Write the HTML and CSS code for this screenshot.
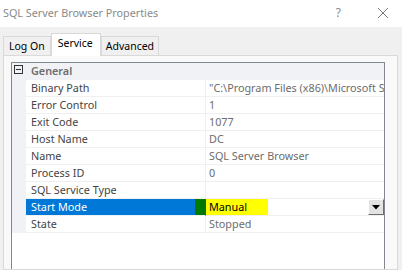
FILE: index.html
```html
<!DOCTYPE html>
<html lang="en">
<head>
    <meta charset="utf-8" />
    <title>SQL Server Browser Properties</title>
    <link rel="stylesheet" href="styles.css">
</head>
<body>
    <div id="titlebar">
        <span class="title-text">SQL Server Browser Properties</span>
        <span class="title-help">?</span>
        <svg class="title-close" width="12" height="12" viewBox="0 0 12 12">
            <path d="M1 1 L11 11 M11 1 L1 11" stroke="#7a7a7a" stroke-width="1" fill="none" />
        </svg>
    </div>

    <div id="tabMenu">
        <div class="tab">Log On</div>
        <div class="tab active">Service</div>
        <div class="tab">Advanced</div>
    </div>

    <div id="page">
        <div id="grid">
            <div class="row category">
                <div class="gutter"><span class="expander"></span></div>
                <div class="cat-name">General</div>
            </div>
            <div class="row">
                <div class="gutter"></div>
                <div class="name">Binary Path</div>
                <div class="value">"C:\Program Files (x86)\Microsoft SQL Server\90\Shared\sqlbrowser.exe"</div>
            </div>
            <div class="row">
                <div class="gutter"></div>
                <div class="name">Error Control</div>
                <div class="value">1</div>
            </div>
            <div class="row">
                <div class="gutter"></div>
                <div class="name">Exit Code</div>
                <div class="value">1077</div>
            </div>
            <div class="row">
                <div class="gutter"></div>
                <div class="name">Host Name</div>
                <div class="value">DC</div>
            </div>
            <div class="row">
                <div class="gutter"></div>
                <div class="name">Name</div>
                <div class="value">SQL Server Browser</div>
            </div>
            <div class="row">
                <div class="gutter"></div>
                <div class="name">Process ID</div>
                <div class="value">0</div>
            </div>
            <div class="row">
                <div class="gutter"></div>
                <div class="name">SQL Service Type</div>
                <div class="value"></div>
            </div>
            <div class="row selected">
                <div class="gutter"></div>
                <div class="name">Start Mode</div>
                <div class="value edit">
                    <span class="marked">Manual</span>
                    <span class="drop-button">
                        <svg width="8" height="5" viewBox="0 0 8 5"><path d="M0 0 H8 L4 4.5 Z" fill="#000" /></svg>
                    </span>
                </div>
            </div>
            <div class="row">
                <div class="gutter"></div>
                <div class="name">State</div>
                <div class="value">Stopped</div>
            </div>
        </div>
    </div>
</body>
</html>
```

FILE: styles.css
```css
body {
    margin: 0;
    width: 402px;
    height: 270px;
    overflow: hidden;
    background: #f0f0f0;
    font-family: "Noto Sans", "Open Sans", sans-serif;
    font-size: 10.8px;
    display: flex;
    flex-direction: column;
}

#titlebar {
    height: 27px;
    flex: none;
    background: #ffffff;
    display: flex;
    align-items: center;
    padding-left: 3px;
}

.title-text {
    color: #8a8a8a;
    font-size: 10.8px;
    flex: 1;
    margin-top: -2px;
}

.title-help {
    color: #8a8a8a;
    font-size: 12px;
    margin-right: 36px;
    margin-top: -3px;
}

.title-close {
    margin-right: 13px;
    margin-top: -2px;
}

#tabMenu {
    display: flex;
    align-items: flex-end;
    height: 21px;
    margin-top: 7px;
    padding-left: 3px;
    flex: none;
    font-size: 10.5px;
}

.tab {
    height: 18px;
    line-height: 19px;
    padding: 0 5px;
    border: 1px solid #d9d9d9;
    border-bottom: none;
    background: #f0f0f0;
    color: #000;
}

    .tab + .tab {
        border-left: none;
    }

    .tab.active {
        height: 22px;
        line-height: 19px;
        padding: 0 7px 0 6px;
        background: #ffffff;
        margin-bottom: -1px;
        position: relative;
        z-index: 1;
        border-left: 1px solid #d9d9d9;
    }

    .tab.active + .tab {
        border-left: 1px solid #d9d9d9;
        padding: 0 4px;
    }

#page {
    flex: 1;
    margin: 0 4px 0 3px;
    border: 1px solid #d9d9d9;
    background: #f9f9f9;
    padding: 6px 12px 0 7px;
    display: flex;
    flex-direction: column;
}

#grid {
    flex: 1;
    background: #ffffff;
    border: 1px solid #828790;
    border-bottom: none;
}

.row {
    display: grid;
    grid-template-columns: 14px 180px 1fr;
    height: 17px;
    line-height: 16px;
    color: #444444;
}

.gutter {
    background: #f0f2f5;
}

.name {
    padding-left: 5px;
    border-bottom: 1px solid #f0f0f0;
    border-right: 1px solid #f0f0f0;
    white-space: nowrap;
    overflow: hidden;
}

.value {
    padding-left: 3px;
    border-bottom: 1px solid #f0f0f0;
    color: #6d6d6d;
    white-space: nowrap;
    overflow: hidden;
}

.category {
    background: #f0f2f5;
}

.cat-name {
    grid-column: 2 / 4;
    padding-left: 5px;
    font-weight: 600;
    color: #6d6d6d;
}

.expander {
    display: block;
    width: 7px;
    height: 7px;
    margin: 2px 0 0 2px;
    border: 1px solid #333333;
    background: linear-gradient(#333333, #333333) center / 5px 1px no-repeat;
}

.selected .name {
    background: linear-gradient(to right, #0078d7 169px, #007a00 169px);
    color: #ffffff;
    border-right-color: #007a00;
}

.value.edit {
    padding-left: 0;
    display: flex;
    color: #000000;
}

.marked {
    display: block;
    width: 59px;
    padding-left: 3px;
    background: #ffff00;
}

.drop-button {
    margin-left: auto;
    width: 14px;
    height: 14px;
    border: 1px solid;
    border-color: #ffffff #6d6d6d #6d6d6d #ffffff;
    background: #e3e3e3;
    display: flex;
    align-items: center;
    justify-content: center;
}
```
